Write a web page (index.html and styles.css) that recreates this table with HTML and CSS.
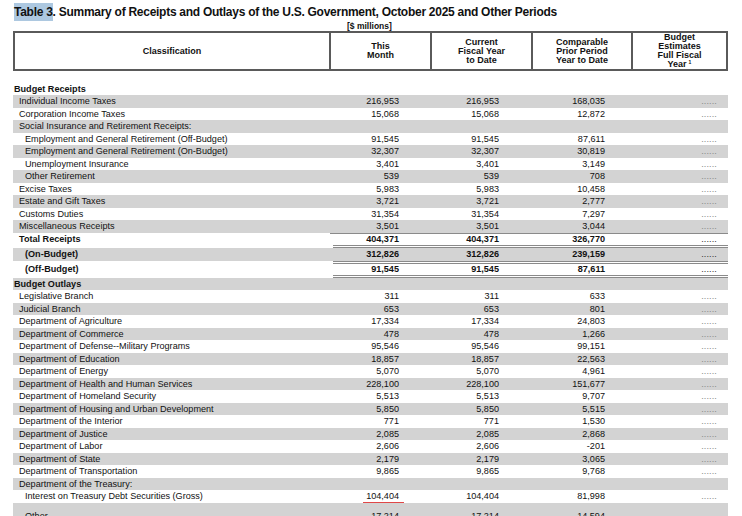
FILE: index.html
```html
<!DOCTYPE html>
<html lang="en">
<head>
<meta charset="utf-8">
<title>Table 3</title>
<link rel="stylesheet" href="styles.css">
</head>
<body>
<div class="page">
  <h1 class="title"><span class="hl">Table 3</span>. Summary of Receipts and Outlays of the U.S. Government, October 2025 and Other Periods</h1>
  <div class="units">[$ millions]</div>
  <div class="head">
    <div class="hc"><span>Classification</span></div>
    <div class="hc"><span>This<br>Month</span></div>
    <div class="hc"><span>Current<br>Fiscal Year<br>to Date</span></div>
    <div class="hc"><span>Comparable<br>Prior Period<br>Year to Date</span></div>
    <div class="hc"><span>Budget<br>Estimates<br>Full Fiscal<br>Year<sup>1</sup></span></div>
  </div>

  <div class="body">
    <div class="row sec"><div class="l b">Budget Receipts</div><div class="n"></div><div class="n"></div><div class="n"></div><div class="d"></div></div>
    <div class="row g"><div class="l i1">Individual Income Taxes</div><div class="n c2">216,953</div><div class="n c3">216,953</div><div class="n c4">168,035</div><div class="d">......</div></div>
    <div class="row"><div class="l i1">Corporation Income Taxes</div><div class="n c2">15,068</div><div class="n c3">15,068</div><div class="n c4">12,872</div><div class="d">......</div></div>
    <div class="row g"><div class="l i1">Social Insurance and Retirement Receipts:</div><div class="n"></div><div class="n"></div><div class="n"></div><div class="d"></div></div>
    <div class="row"><div class="l i2">Employment and General Retirement (Off-Budget)</div><div class="n c2">91,545</div><div class="n c3">91,545</div><div class="n c4">87,611</div><div class="d">......</div></div>
    <div class="row g"><div class="l i2">Employment and General Retirement (On-Budget)</div><div class="n c2">32,307</div><div class="n c3">32,307</div><div class="n c4">30,819</div><div class="d">......</div></div>
    <div class="row"><div class="l i2">Unemployment Insurance</div><div class="n c2">3,401</div><div class="n c3">3,401</div><div class="n c4">3,149</div><div class="d">......</div></div>
    <div class="row g"><div class="l i2">Other Retirement</div><div class="n c2">539</div><div class="n c3">539</div><div class="n c4">708</div><div class="d">......</div></div>
    <div class="row"><div class="l i1">Excise Taxes</div><div class="n c2">5,983</div><div class="n c3">5,983</div><div class="n c4">10,458</div><div class="d">......</div></div>
    <div class="row g"><div class="l i1">Estate and Gift Taxes</div><div class="n c2">3,721</div><div class="n c3">3,721</div><div class="n c4">2,777</div><div class="d">......</div></div>
    <div class="row"><div class="l i1">Customs Duties</div><div class="n c2">31,354</div><div class="n c3">31,354</div><div class="n c4">7,297</div><div class="d">......</div></div>
    <div class="row g"><div class="l i1">Miscellaneous Receipts</div><div class="n c2">3,501</div><div class="n c3">3,501</div><div class="n c4">3,044</div><div class="d">......</div></div>
    <div class="row total b"><div class="l i1">Total Receipts</div><div class="n c2 tl">404,371</div><div class="n c3 tl">404,371</div><div class="n c4 tl">326,770</div><div class="d tl">......</div></div>
    <div class="dbl"><div></div><div class="dl"></div></div>
    <div class="row g b on"><div class="l i2">(On-Budget)</div><div class="n c2">312,826</div><div class="n c3">312,826</div><div class="n c4">239,159</div><div class="d">......</div></div>
    <div class="dbl"><div></div><div class="dl"></div></div>
    <div class="row b off"><div class="l i2">(Off-Budget)</div><div class="n c2">91,545</div><div class="n c3">91,545</div><div class="n c4">87,611</div><div class="d">......</div></div>
    <div class="dbl"><div></div><div class="dl"></div></div>
    <div class="row g sec"><div class="l b">Budget Outlays</div><div class="n"></div><div class="n"></div><div class="n"></div><div class="d"></div></div>
    <div class="row"><div class="l i1">Legislative Branch</div><div class="n c2">311</div><div class="n c3">311</div><div class="n c4">633</div><div class="d">......</div></div>
    <div class="row g"><div class="l i1">Judicial Branch</div><div class="n c2">653</div><div class="n c3">653</div><div class="n c4">801</div><div class="d">......</div></div>
    <div class="row"><div class="l i1">Department of Agriculture</div><div class="n c2">17,334</div><div class="n c3">17,334</div><div class="n c4">24,803</div><div class="d">......</div></div>
    <div class="row g"><div class="l i1">Department of Commerce</div><div class="n c2">478</div><div class="n c3">478</div><div class="n c4">1,266</div><div class="d">......</div></div>
    <div class="row"><div class="l i1">Department of Defense--Military Programs</div><div class="n c2">95,546</div><div class="n c3">95,546</div><div class="n c4">99,151</div><div class="d">......</div></div>
    <div class="row g"><div class="l i1">Department of Education</div><div class="n c2">18,857</div><div class="n c3">18,857</div><div class="n c4">22,563</div><div class="d">......</div></div>
    <div class="row"><div class="l i1">Department of Energy</div><div class="n c2">5,070</div><div class="n c3">5,070</div><div class="n c4">4,961</div><div class="d">......</div></div>
    <div class="row g"><div class="l i1">Department of Health and Human Services</div><div class="n c2">228,100</div><div class="n c3">228,100</div><div class="n c4">151,677</div><div class="d">......</div></div>
    <div class="row"><div class="l i1">Department of Homeland Security</div><div class="n c2">5,513</div><div class="n c3">5,513</div><div class="n c4">9,707</div><div class="d">......</div></div>
    <div class="row g"><div class="l i1">Department of Housing and Urban Development</div><div class="n c2">5,850</div><div class="n c3">5,850</div><div class="n c4">5,515</div><div class="d">......</div></div>
    <div class="row"><div class="l i1">Department of the Interior</div><div class="n c2">771</div><div class="n c3">771</div><div class="n c4">1,530</div><div class="d">......</div></div>
    <div class="row g"><div class="l i1">Department of Justice</div><div class="n c2">2,085</div><div class="n c3">2,085</div><div class="n c4">2,868</div><div class="d">......</div></div>
    <div class="row"><div class="l i1">Department of Labor</div><div class="n c2">2,606</div><div class="n c3">2,606</div><div class="n c4">-201</div><div class="d">......</div></div>
    <div class="row g"><div class="l i1">Department of State</div><div class="n c2">2,179</div><div class="n c3">2,179</div><div class="n c4">3,065</div><div class="d">......</div></div>
    <div class="row"><div class="l i1">Department of Transportation</div><div class="n c2">9,865</div><div class="n c3">9,865</div><div class="n c4">9,768</div><div class="d">......</div></div>
    <div class="row g"><div class="l i1">Department of the Treasury:</div><div class="n"></div><div class="n"></div><div class="n"></div><div class="d"></div></div>
    <div class="row"><div class="l i2">Interest on Treasury Debt Securities (Gross)</div><div class="n c2"><span class="spell">104,404</span></div><div class="n c3">104,404</div><div class="n c4">81,998</div><div class="d">......</div></div>
    <div class="row g last"><div class="l i2">Other</div><div class="n c2">17,214</div><div class="n c3">17,214</div><div class="n c4">14,594</div><div class="d">......</div></div>
  </div>
</div>
</body>
</html>
```
FILE: styles.css
```css
html, body {
  margin: 0;
  padding: 0;
  background: #ffffff;
}
body {
  font-family: "Liberation Sans", Arial, sans-serif;
  color: #111111;
}
.page {
  padding: 4px 0 0 13px;
  width: 715px;
}
.title {
  margin: 0 0 0 1px;
  font-size: 12px;
  letter-spacing: -0.27px;
  font-weight: bold;
  line-height: 17px;
  height: 17px;
  white-space: nowrap;
}
.hl {
  background: #adc8e0;
  padding: 2px 0;
}
.units {
  margin-left: 334px;
  font-size: 8.5px;
  font-weight: bold;
  line-height: 10px;
  height: 10px;
}
.head {
  display: grid;
  grid-template-columns: 314px 101px 101px 100px 95px;
  height: 40px;
  border: 2px solid #5a5a5a;
  box-sizing: border-box;
}
.hc {
  display: flex;
  align-items: center;
  justify-content: center;
  text-align: center;
  font-size: 9px;
  font-weight: bold;
  line-height: 9px;
}
.hc + .hc {
  border-left: 2px solid #5a5a5a;
}
.hc sup {
  font-size: 5px;
  line-height: 0;
  vertical-align: 3px;
  margin-left: 2px;
}
.body {
  margin-top: 11.5px;
}
.row {
  display: grid;
  grid-template-columns: 317px 101px 101px 100px 96px;
  height: 12.5px;
  line-height: 12.5px;
  font-size: 9.1px;
  white-space: nowrap;
}
.row.g {
  background: #d3d3d3;
}
.b {
  font-weight: bold;
}
.l {
  padding-left: 1px;
}
.l.i1 {
  padding-left: 6px;
}
.l.i2 {
  padding-left: 12px;
}
.n {
  text-align: right;
}
.c2 {
  padding-right: 32px;
}
.c3 {
  padding-right: 33px;
}
.c4 {
  padding-right: 27px;
}
.d {
  text-align: right;
  padding-right: 11px;
  color: #8a8a8a;
  font-weight: normal;
  letter-spacing: 0.1px;
}
.row.b .d {
  color: #333333;
}
.row.total {
  height: 12px;
  line-height: 12px;
}
.tl {
  box-shadow: inset 0 1px 0 #8a8a8a;
}
.row.on {
  height: 13px;
  line-height: 13px;
}
.row.off {
  height: 11px;
  line-height: 11px;
}
.row.last {
  height: 14px;
  line-height: 27px;
}
.dbl {
  display: grid;
  grid-template-columns: 320px 395px;
  height: 3px;
}
.dl {
  border-top: 1px solid #8a8a8a;
  border-bottom: 1px solid #8a8a8a;
  box-sizing: border-box;
  height: 3px;
}
.spell {
  display: inline-block;
  line-height: 9.5px;
  border-bottom: 1px solid #e04848;
  padding-left: 3px;
  padding-right: 5px;
  margin-right: -5px;
}
```
